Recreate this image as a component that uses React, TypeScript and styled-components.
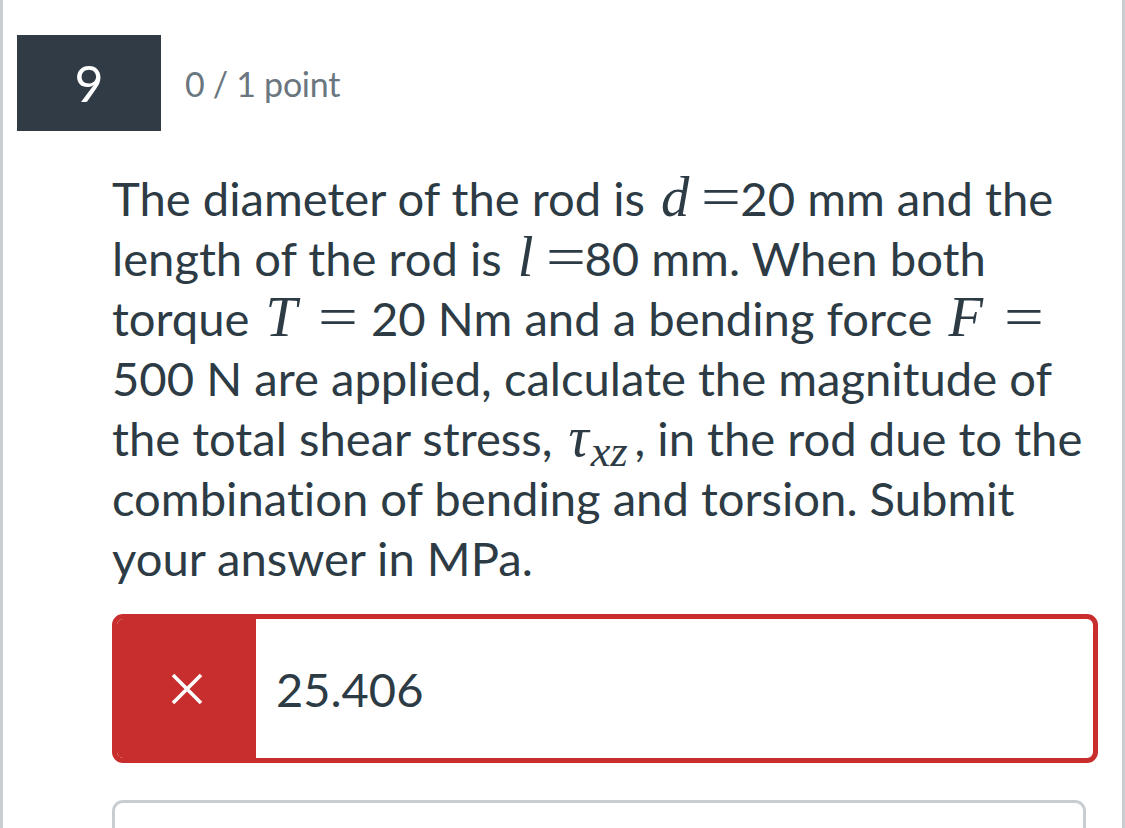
import React from 'react'
import styled, { createGlobalStyle } from 'styled-components'

const GlobalStyle = createGlobalStyle`
  html, body {
    margin: 0;
    padding: 0;
    background: #fff;
  }
  body {
    font-family: Lato, 'Liberation Sans', sans-serif;
    color: #2d3b45;
  }
`

const Card = styled.div`
  box-sizing: border-box;
  width: 1125px;
  height: 828px;
  overflow: hidden;
  border-left: 3px solid #c7cdd1;
  border-right: 3px solid #c7cdd1;
  padding: 35px 0 0 14px;
`

const Header = styled.div`
  display: flex;
  align-items: center;
  gap: 24px;
`

const Badge = styled.div`
  width: 144px;
  height: 96px;
  background: #313b45;
  color: #fff;
  display: flex;
  align-items: center;
  justify-content: center;
  font-size: 50px;
  line-height: 1;
`

const Points = styled.div`
  font-size: 34px;
  color: #6b7780;
  letter-spacing: -0.3px;
`

const Body = styled.div`
  padding-left: 95px;
  width: 986px;
`

const Question = styled.p`
  margin: 37px 0 0;
  font-size: 47.2px;
  line-height: 60px;
  color: #2d3b45;
  font-variant-ligatures: none;
`

const MathVar = styled.span`
  font-family: 'Liberation Serif', 'DejaVu Serif', serif;
  font-style: italic;
  font-size: 1.2em;
  line-height: 0;
  white-space: nowrap;
  margin-left: 4px;
`

// "=" inside inline math; $spaced adds the relation space after it too
const Eq = styled.span<{ $spaced?: boolean }>`
  font-family: 'Liberation Serif', serif;
  font-style: normal;
  display: inline-block;
  transform: scaleX(1.25);
  margin: 0 ${({ $spaced }) => ($spaced ? '17px 0 25px' : '3px 0 16px')};
`

const Sub = styled.span`
  font-size: 0.78em;
  position: relative;
  top: 0.22em;
  margin-left: 2px;
  margin-right: 7px;
`

const AnswerBox = styled.div`
  box-sizing: border-box;
  margin-top: 26px;
  height: 149px;
  border: 5px solid #c92e2e;
  border-radius: 11px;
  display: flex;
  overflow: hidden;
`

const WrongMark = styled.div`
  width: 139px;
  background: #c92e2e;
  display: flex;
  align-items: center;
  justify-content: center;
`

const AnswerValue = styled.div`
  flex: 1;
  display: flex;
  align-items: center;
  padding-left: 20px;
  font-size: 47px;
  color: #2d3b45;
`

const NextBox = styled.div`
  box-sizing: border-box;
  margin-top: 37px;
  width: 974px;
  height: 80px;
  border: 3px solid #c7cdd1;
  border-radius: 11px;
`

export default function App() {
  return (
    <>
      <GlobalStyle />
      <Card>
        <Header>
          <Badge>9</Badge>
          <Points>0 / 1 point</Points>
        </Header>
        <Body>
          <Question>
            The diameter of the rod is <MathVar>d<Eq>=</Eq></MathVar>20 mm and the length of the rod is{' '}
            <MathVar>l<Eq>=</Eq></MathVar>80 mm. When both torque{' '}
            <MathVar>T<Eq $spaced>=</Eq></MathVar>20 Nm and a bending force{' '}
            <MathVar>F<Eq $spaced>=</Eq></MathVar>500 N are applied, calculate the magnitude of the total shear stress,{' '}
            <MathVar>
              τ<Sub>xz</Sub>
            </MathVar>
            , in the rod due to the combination of bending and torsion. Submit your answer in MPa.
          </Question>
          <AnswerBox>
            <WrongMark>
              <svg width="32" height="32" viewBox="0 0 32 32">
                <path d="M2 2 L30 30 M30 2 L2 30" stroke="#fff" strokeWidth="3.6" />
              </svg>
            </WrongMark>
            <AnswerValue>25.406</AnswerValue>
          </AnswerBox>
          <NextBox />
        </Body>
      </Card>
    </>
  )
}
